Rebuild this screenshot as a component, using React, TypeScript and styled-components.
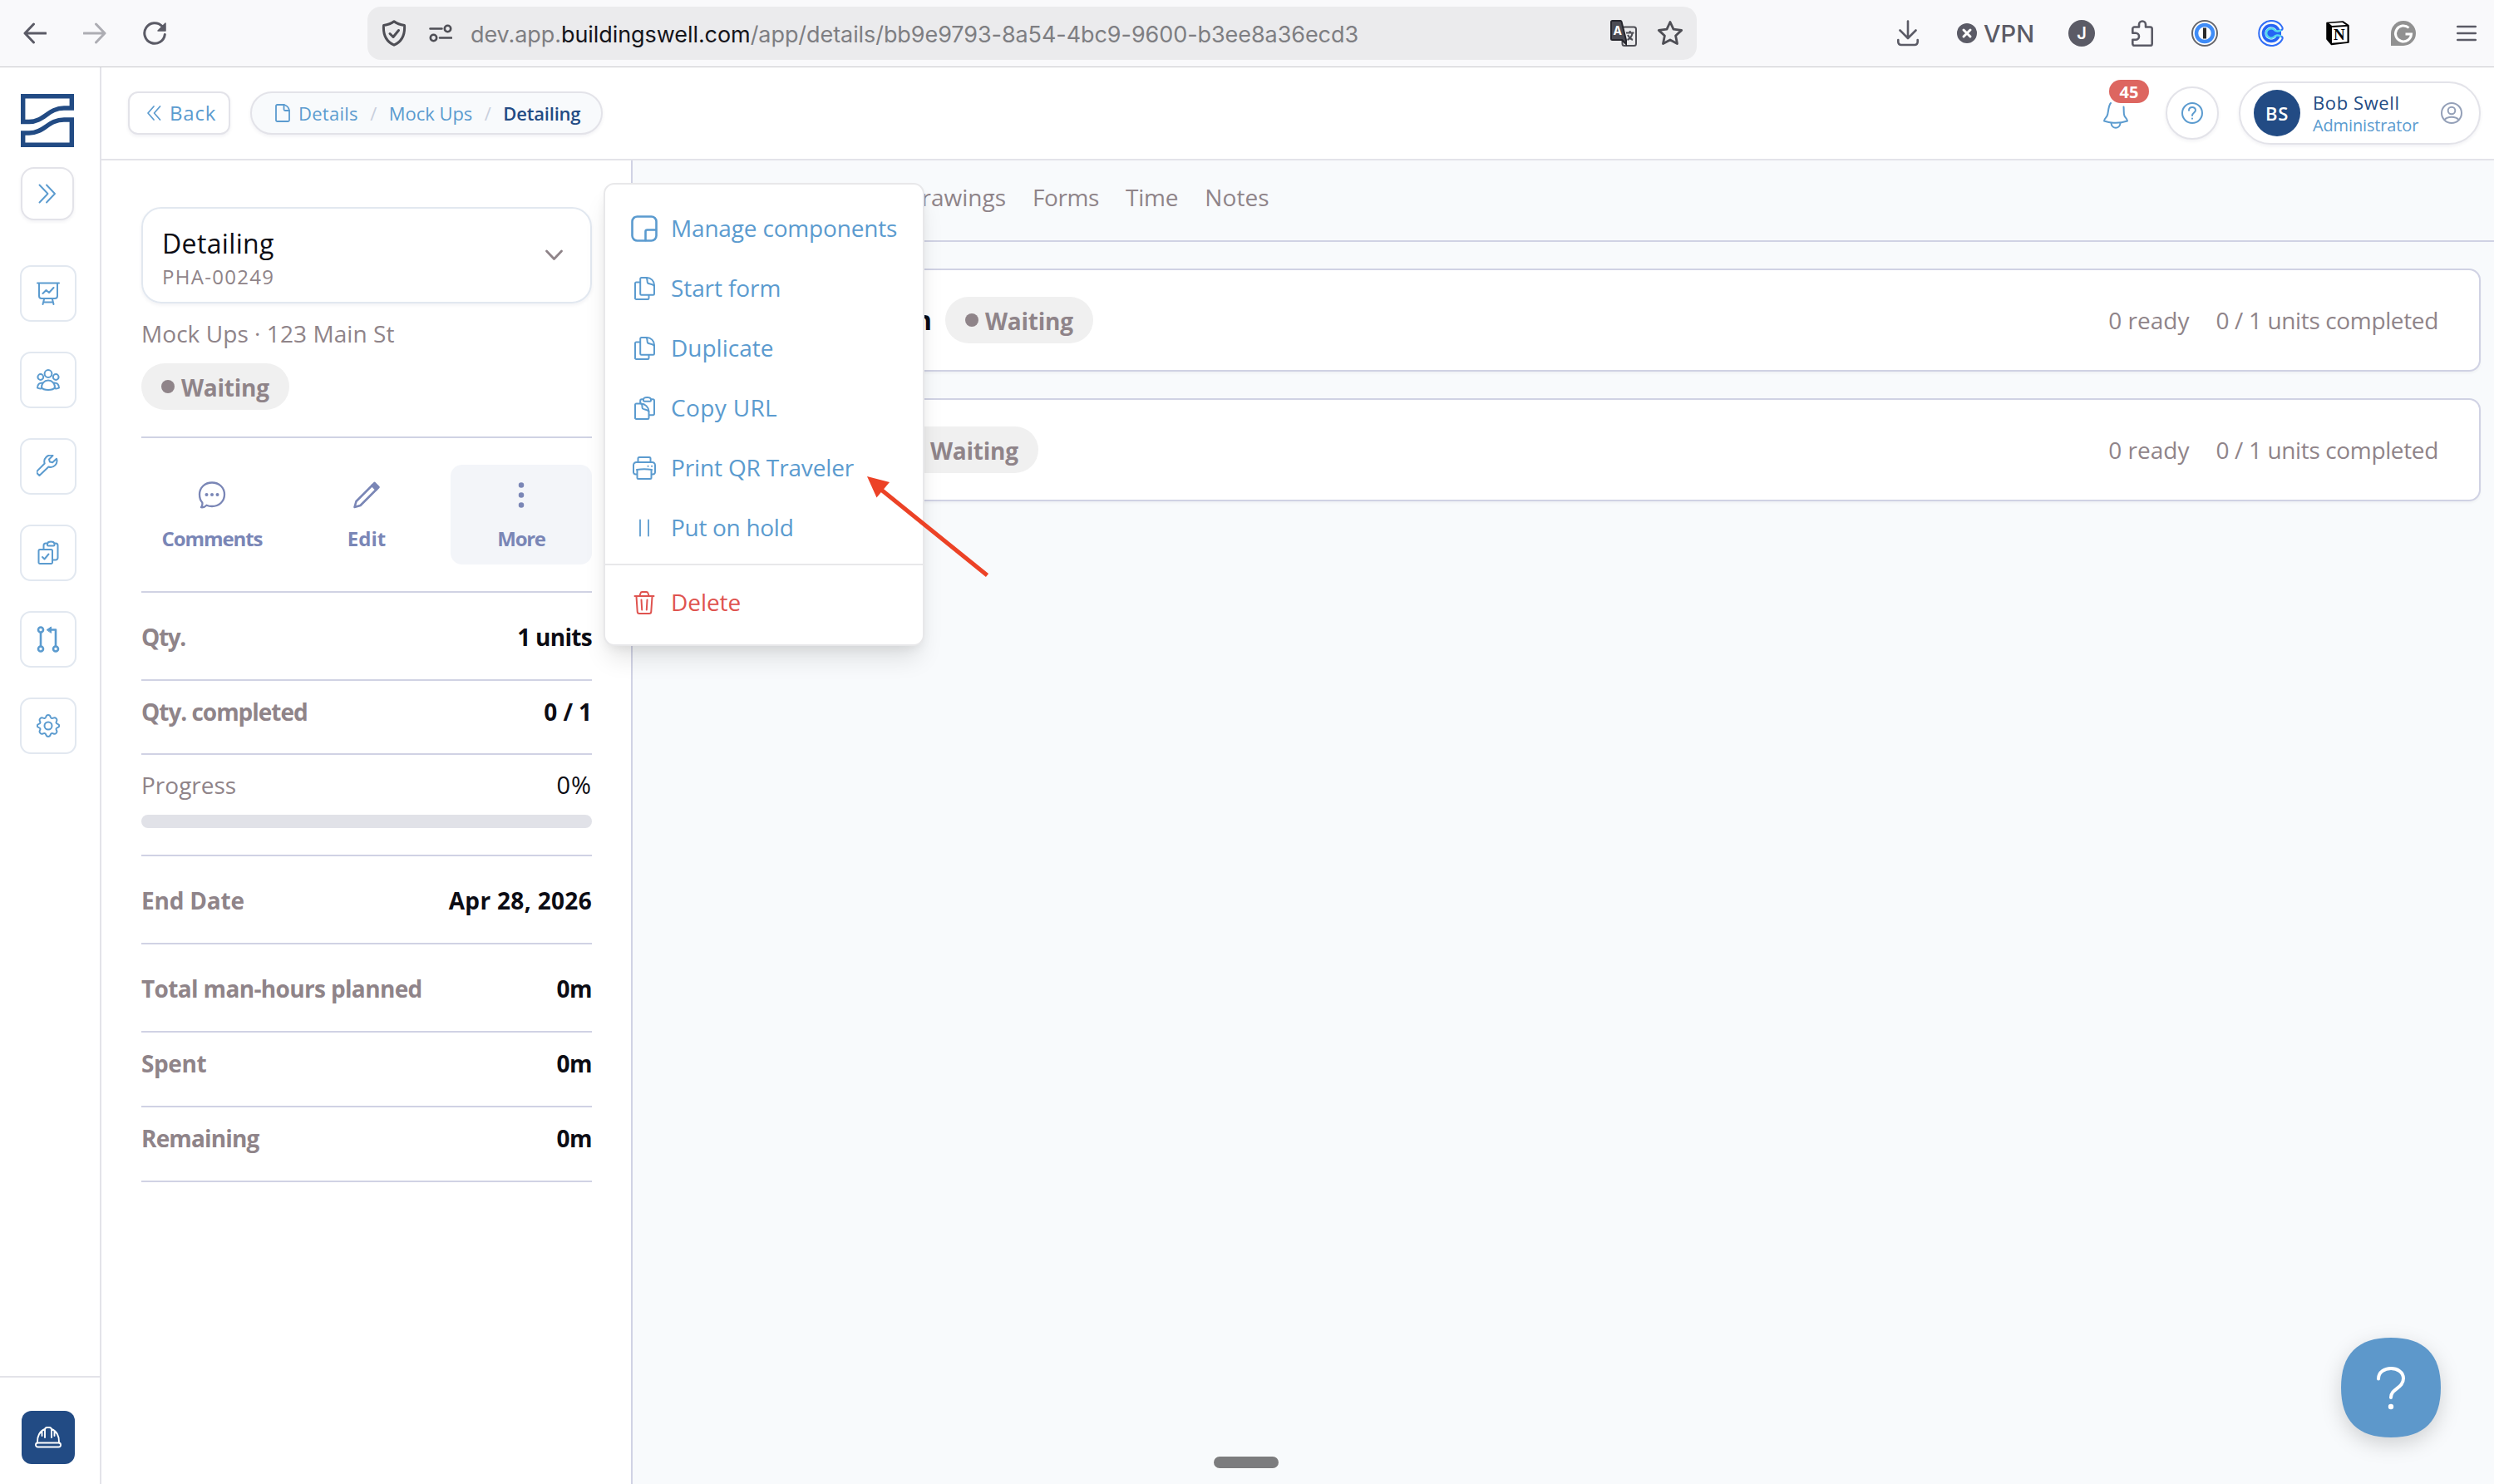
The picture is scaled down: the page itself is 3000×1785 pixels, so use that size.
import React from "react";
import styled, { createGlobalStyle, css } from "styled-components";

const blue = "#5b9bcf";
const navy = "#224b84";
const mute = "#8f8489";
const line = "#d0d2e4";
const edge = "#e3e3e9";
const ink = "#0c0c14";
const violet = "#7a86b6";
const chrome = "#5b5b66";

const GlobalStyle = createGlobalStyle`
  *, *::before, *::after { box-sizing: border-box; }
  body { margin: 0; background: #fff; font-family: "Open Sans", "Noto Sans", sans-serif; }
`;

interface TextProps {
  $size?: number;
  $weight?: number;
  $track?: number;
  $color?: string;
}

const Text = styled.span<TextProps>`
  display: block;
  white-space: nowrap;
  font-size: ${(p) => p.$size ?? 28}px;
  line-height: 1.5;
  font-weight: ${(p) => p.$weight ?? 400};
  letter-spacing: ${(p) => p.$track ?? 0}px;
  color: ${(p) => p.$color ?? mute};
`;

const Page = styled.div`
  position: relative;
  width: 3000px;
  height: 1785px;
  overflow: hidden;
  display: flex;
  flex-direction: column;
  background: #fff;
`;

/* Browser chrome */

const BrowserBar = styled.header`
  flex: none;
  height: 81px;
  display: flex;
  align-items: center;
  padding: 0 20px 0 28px;
  background: #f9f9fb;
  border-bottom: 1px solid #c9c9cc;
`;

const HistoryButtons = styled.div`
  display: flex;
  align-items: center;
  gap: 44px;
  width: 414px;
`;

const AddressBar = styled.div`
  width: 1599px;
  height: 64px;
  border-radius: 16px;
  background: #ebebed;
  display: flex;
  align-items: center;
  padding: 0 16px 0 17px;
`;

const Address = styled.div`
  flex: 1;
  margin-left: 22px;
  padding-top: 2px;
  font-family: Inter, "Liberation Sans", sans-serif;
  font-size: 27px;
  letter-spacing: -0.07px;
  white-space: nowrap;
  color: #7e7e82;
  strong { font-weight: 400; color: #15141a; }
`;

const AddressTools = styled.div`
  display: flex;
  align-items: center;
  gap: 24px;
`;

const Extension = styled.div<{ $gap: number }>`
  margin-left: ${(p) => p.$gap}px;
  display: flex;
  align-items: center;
  gap: 8px;
`;

const VpnLabel = styled.span`
  width: 63px;
  font-family: Inter, sans-serif;
  font-size: 29px;
  font-weight: 500;
  color: ${chrome};
`;

const Initial = styled.span`
  width: 32px;
  height: 32px;
  border-radius: 50%;
  background: ${chrome};
  color: #fff;
  font: 600 20px/32px Inter, sans-serif;
  text-align: center;
`;

/* Application shell */

const Shell = styled.div`
  flex: 1;
  display: flex;
  min-height: 0;
`;

const Sidebar = styled.aside`
  flex: none;
  width: 122px;
  border-right: 2px solid ${edge};
  display: flex;
  flex-direction: column;
`;

const SidebarTop = styled.div`
  padding: 32px 0 0 25px;
  display: flex;
  flex-direction: column;
  gap: 24px;
`;

const surface = css`
  background: #fff;
  border: 2px solid ${edge};
  box-shadow: 0 2px 4px rgba(20, 20, 60, 0.06);
`;

const ExpandButton = styled.button`
  ${surface}
  width: 64px;
  height: 64px;
  padding: 0;
  border-radius: 16px;
  display: grid;
  place-items: center;
`;

const NavList = styled.nav`
  padding: 54px 0 0 24px;
  display: flex;
  flex-direction: column;
  gap: 36px;
`;

const NavButton = styled.button`
  width: 68px;
  height: 68px;
  padding: 0;
  border: 2px solid #e2e8f0;
  border-radius: 13px;
  background: #fff;
  display: grid;
  place-items: center;
`;

const SidebarFoot = styled.div`
  margin-top: auto;
  height: 130px;
  border-top: 2px solid ${edge};
  padding: 40px 0 0 26px;
`;

const HatButton = styled.button`
  width: 64px;
  height: 64px;
  padding: 0;
  border: 0;
  border-radius: 12px;
  background: ${navy};
  display: grid;
  place-items: center;
`;

const Workspace = styled.div`
  flex: 1;
  min-width: 0;
  display: flex;
  flex-direction: column;
`;

const TopBar = styled.div`
  flex: none;
  height: 112px;
  border-bottom: 2px solid ${edge};
  display: flex;
  align-items: center;
  padding: 0 16px 0 32px;
`;

const BackButton = styled.button`
  ${surface}
  width: 123px;
  height: 52px;
  border-radius: 12px;
  padding: 0 0 0 20px;
  display: flex;
  align-items: center;
  gap: 10px;
  font-family: inherit;
`;

const Breadcrumb = styled.nav`
  ${surface}
  width: 424px;
  height: 52px;
  margin-left: 24px;
  padding-left: 28px;
  border-radius: 26px;
  background: #f8fafc;
  display: flex;
  align-items: center;
  gap: 14.5px;
`;

const Crumb = styled.span`
  display: flex;
  align-items: center;
  gap: 10px;
`;

const TopActions = styled.div`
  margin-left: auto;
  display: flex;
  align-items: center;
  gap: 24px;
`;

const Bell = styled.div`
  position: relative;
  width: 57px;
  height: 64px;
  padding: 14px 0 0 6px;
`;

const BellCount = styled.span`
  position: absolute;
  left: 13px;
  top: -8px;
  width: 48px;
  height: 28px;
  border-radius: 14px;
  background: #dd6660;
  color: #fff;
  font-size: 20px;
  font-weight: 700;
  line-height: 29px;
  text-align: center;
`;

const RoundButton = styled.button`
  ${surface}
  width: 64px;
  height: 64px;
  padding: 0;
  border-radius: 50%;
  display: grid;
  place-items: center;
`;

const UserPill = styled.div`
  ${surface}
  width: 291px;
  height: 76px;
  border-radius: 38px;
  padding-left: 16px;
  display: flex;
  align-items: center;
`;

const Avatar = styled.div`
  width: 56px;
  height: 56px;
  border-radius: 50%;
  background: ${navy};
  display: grid;
  place-items: center;
`;

const UserText = styled.div`
  width: 154px;
  margin-left: 15px;
  padding-top: 2px;
  display: flex;
  flex-direction: column;
  ${Text} { line-height: 27px; }
`;

const Body = styled.div`
  flex: 1;
  min-height: 0;
  display: flex;
`;

/* Detail panel */

const Panel = styled.section`
  flex: none;
  width: 639px;
  border-right: 2px solid ${line};
  padding: 56px 47px 0 48px;
`;

const PhaseSelect = styled.div`
  height: 116px;
  border: 2px solid #e2e8f0;
  border-radius: 24px;
  box-shadow: 0 2px 4px rgba(20, 20, 60, 0.06);
  padding: 0 30px 0 23px;
  display: flex;
  align-items: center;
  justify-content: space-between;
`;

const PhaseName = styled.div`
  padding-top: 7px;
  ${Text}:first-child { line-height: 44px; }
  ${Text}:last-child { line-height: 36px; }
`;

const Location = styled.div`
  padding: 15px 0 15px;
`;

const Badge = styled.span`
  width: 178px;
  height: 56px;
  border-radius: 28px;
  background: #f0f0f0;
  padding-left: 24px;
  display: flex;
  align-items: center;
  gap: 8px;
  flex: none;
  ${Text} { padding-top: 2px; }
`;

const Dot = styled.i`
  width: 16px;
  height: 16px;
  border-radius: 50%;
  background: ${mute};
`;

const Actions = styled.div`
  margin-top: 32px;
  border-top: 2px solid ${line};
  border-bottom: 2px solid ${line};
  padding: 32px 0;
  display: grid;
  grid-template-columns: repeat(3, 1fr);
  gap: 16px;
`;

const Action = styled.div<{ $active?: boolean }>`
  position: relative;
  height: 120px;
  border-radius: 14px;
  background: ${(p) => (p.$active ? "#f3f5f9" : "transparent")};
  padding-top: 20px;
  display: flex;
  flex-direction: column;
  align-items: center;
  gap: 17px;
`;

const FactRow = styled.div<{ $top: number; $bottom: number }>`
  padding: ${(p) => p.$top}px 0 ${(p) => p.$bottom}px;
  border-bottom: 2px solid ${line};
`;

const FactLine = styled.div`
  height: 42px;
  display: flex;
  align-items: center;
  justify-content: space-between;
`;

const Track = styled.div`
  height: 16px;
  margin-top: 15px;
  border-radius: 8px;
  background: #e1e2e8;
`;

/* Context menu */

const Menu = styled.div`
  position: absolute;
  z-index: 2;
  left: 184px;
  top: -339px;
  width: 386px;
  height: 557px;
  padding-top: 17px;
  background: #fff;
  border: 2px solid #e8e8ea;
  border-radius: 13px;
  box-shadow: 0 20px 30px -6px rgba(0, 0, 0, 0.11), 0 6px 14px -4px rgba(0, 0, 0, 0.08);
`;

const MenuItem = styled.div`
  height: 72px;
  padding-left: 29px;
  display: flex;
  align-items: center;
  gap: 14px;
  ${Text} { padding-bottom: 2px; }
`;

const MenuIcon = styled.span`
  width: 36px;
  display: grid;
  place-items: center;
`;

const MenuRule = styled.div`
  height: 2px;
  margin: 7px 0 9px;
  background: #e8e8ea;
`;

/* Main area */

const Main = styled.main`
  flex: 1;
  min-width: 0;
  background: #f8fafc;
`;

const Tabs = styled.nav`
  height: 98px;
  border-bottom: 2px solid ${line};
  padding-bottom: 8px;
  display: flex;
  align-items: center;
  gap: 32px;
`;

const LeadingTabs = styled.div`
  width: 449px;
  display: flex;
  justify-content: flex-end;
  gap: 32px;
`;

const Cards = styled.div`
  padding: 32px 16px;
  display: flex;
  flex-direction: column;
  gap: 32px;
`;

const Card = styled.article`
  height: 124px;
  background: #fff;
  border: 2px solid ${line};
  border-radius: 14px;
  box-shadow: 0 2px 3px rgba(20, 20, 60, 0.04);
  padding-right: 49px;
  display: flex;
  align-items: center;
`;

const CardTitle = styled.div<{ $width: number }>`
  width: ${(p) => p.$width}px;
  margin-right: 16px;
  display: flex;
  justify-content: flex-end;
`;

const CardStats = styled.div`
  margin-left: auto;
  display: flex;
  gap: 32px;
`;

const Handle = styled.div`
  position: absolute;
  left: 1460px;
  top: 1752px;
  width: 78px;
  height: 14px;
  border-radius: 7px;
  background: #7c7c7e;
  box-shadow: 0 0 0 1px rgba(255, 255, 255, 0.7);
`;

const HelpWidget = styled.button`
  position: absolute;
  left: 2816px;
  top: 1609px;
  padding: 0;
  border: 0;
  background: none;
  svg { display: block; overflow: visible; filter: drop-shadow(0 8px 12px rgba(0, 0, 0, 0.16)); }
`;

const Pointer = styled.svg`
  position: absolute;
  z-index: 3;
  left: 1036px;
  top: 566px;
`;

/* Icons */

interface IconProps {
  w: number;
  h: number;
  color?: string;
  sw?: number;
  children: React.ReactNode;
}

const Icon = ({ w, h, color = blue, sw = 2, children }: IconProps) => (
  <svg width={w} height={h} viewBox={`0 0 ${w} ${h}`} fill="none" stroke={color} strokeWidth={sw} strokeLinecap="round" strokeLinejoin="round">
    {children}
  </svg>
);

const Logo = () => (
  <svg width="64" height="64" viewBox="0 0 64 64" fill="none" stroke={navy}>
    <path strokeWidth="5.4" d="M2.7 35V2.7H61.3V19" />
    <path strokeWidth="5.4" d="M0 33.5H10C28 33.5 33 17 52 17H64" />
    <path strokeWidth="5.4" d="M0 47H10C28 47 33 31 52 31H64" />
    <path strokeWidth="5.4" d="M2.7 46V61.3H61.3V31" />
  </svg>
);

const FilesIcon = () => (
  <Icon w={26} h={28}>
    <path d="M9.5 1h6.500c5 0 9 4 9 9v10.500a1.300 1.300 0 0 1-1.300 1.300H9.500a1.300 1.300 0 0 1-1.300-1.300V2.300A1.300 1.300 0 0 1 9.500 1z" />
    <path d="M15 1c2.500.8.8 5 2.200 6.500S22.500 8 25 11" />
    <path d="M8 6.500H3.300A1.300 1.300 0 0 0 2 7.800V25.700A1.300 1.300 0 0 0 3.300 27H17.200a1.300 1.300 0 0 0 1.300-1.300V22" />
  </Icon>
);

const UrlIcon = () => (
  <Icon w={26} h={28}>
    <path d="M3.300 8.500H9c5 0 9.500 4.500 9.500 9.500v7.700a1.300 1.300 0 0 1-1.300 1.300H3.300A1.300 1.300 0 0 1 2 25.700V9.800A1.300 1.300 0 0 1 3.300 8.500z" />
    <path d="M9 8.500c2.500.8.800 4.500 2 6s5 .5 7.300 3" />
    <path d="M8.200 8V5a1.700 1.700 0 0 1 1.700-1.700h2M21 3.300h2.300A1.700 1.700 0 0 1 25 5v15.500a1.700 1.700 0 0 1-1.700 1.700H19" />
    <path d="M12 3.300c.5-3 8.500-3 9 0v1.400a1 1 0 0 1-1 1h-7a1 1 0 0 1-1-1z" />
  </Icon>
);

const PrintIcon = () => (
  <Icon w={28} h={28}>
    <path d="M6.500 7V2.500A1.500 1.500 0 0 1 8 1h12a1.500 1.500 0 0 1 1.500 1.500V7" />
    <path d="M5 21.500H3.500A2.500 2.500 0 0 1 1 19v-8.500A3.500 3.500 0 0 1 4.500 7h19a3.500 3.500 0 0 1 3.500 3.500V19a2.500 2.500 0 0 1-2.500 2.500H23" />
    <path d="M5 16c6-1 12-1 18 0M5.500 16v9.500A1.500 1.500 0 0 0 7 27h14a1.500 1.500 0 0 0 1.500-1.500V16" />
    <path d="M18.500 11.800h.1M23 11.800h.1" />
  </Icon>
);

const menuItems: { label: string; track: number; icon: React.ReactNode }[] = [
  {
    label: "Manage components",
    track: -0.18,
    icon: (
      <Icon w={32} h={32} sw={2.600}>
        <rect x="1.500" y="1.500" width="29" height="29" rx="6" />
        <path d="M30 17.500H19.500a2 2 0 0 0-2 2V30" />
      </Icon>
    ),
  },
  { label: "Start form", track: -0.1, icon: <FilesIcon /> },
  { label: "Duplicate", track: 0, icon: <FilesIcon /> },
  { label: "Copy URL", track: 0.35, icon: <UrlIcon /> },
  { label: "Print QR Traveler", track: -0.14, icon: <PrintIcon /> },
  {
    label: "Put on hold",
    track: -0.3,
    icon: (
      <Icon w={14} h={22} sw={1.800}>
        <path d="M2 1.500v19M12 1.500v19" />
      </Icon>
    ),
  },
];

const navIcons: React.ReactNode[] = [
  <Icon w={28} h={28}>
    <path d="M1 1.500h26M3 2v15a3 3 0 0 0 3 3h16a3 3 0 0 0 3-3V2M9 21l-1.500 6M19 21l1.500 6M8.300 24.500h11.400M7.500 14l4-4 3.500 3 5.500-6" />
  </Icon>,
  <Icon w={28} h={26}>
    <circle cx="14" cy="5.500" r="4.400" />
    <circle cx="4.800" cy="9.500" r="3.400" />
    <circle cx="23.200" cy="9.500" r="3.400" />
    <path d="M14 13.500c-5 0-8 4-8 8.500 2 4 14 4 16 0 0-4.500-3-8.500-8-8.500zM7.500 16.500C3.500 16 1 18.500 1 22.500c1 .8 3 1 5 .8M20.500 16.500c4-.5 6.500 2 6.500 6-1 .8-3 1-5 .8" />
  </Icon>,
  <Icon w={28} h={28}>
    <path transform="translate(-1.500 -1.500)" d="M21 2.500a7.600 7.600 0 0 0-9.800 9.500L2.600 20.600a2.500 2.500 0 0 0 0 3.600l2.300 2.300 11-10.500a7.600 7.600 0 0 0 9.600-9.800l-4.800 4.600-3.300-.8-.900-3z" />
  </Icon>,
  <Icon w={26} h={30}>
    <path d="M3 11h13.500a1.500 1.500 0 0 1 1.500 1.500v14a1.500 1.500 0 0 1-1.500 1.500H3a1.500 1.500 0 0 1-1.500-1.500v-14A1.500 1.500 0 0 1 3 11zM6 20l2.500 2.500 5-6" />
    <path d="M7.500 10.500V6A2.500 2.500 0 0 1 10 3.500h2M20.500 3.500h1.500A2.500 2.500 0 0 1 24.500 6v15a2.500 2.500 0 0 1-2.500 2.500h-3.500M12 4c.5-3.500 8-3.500 8.500 0v1.500a1 1 0 0 1-1 1H13a1 1 0 0 1-1-1z" />
  </Icon>,
  <Icon w={28} h={32} sw={2.600}>
    <circle cx="5" cy="4.500" r="3" />
    <circle cx="5" cy="27.500" r="3" />
    <circle cx="23" cy="27.500" r="3" />
    <path d="M5 8v16M23 24V4.500h-7" />
    <path d="M12.500 4.500l5-3.500v7z" fill={blue} strokeWidth="1" />
  </Icon>,
  <Icon w={28} h={28}>
    <circle cx="14" cy="14" r="4.500" />
    <path d="M11.300 3.200c.8-2.900 4.600-2.900 5.400 0 .6 1.800 1.800 2.300 3.400 1.500 2.600-1.400 5.300 1.300 3.900 3.900-.9 1.600-.4 2.800 1.300 3.300 2.600.8 2.600 3.400 0 4.200-1.700.5-2.200 1.700-1.300 3.300 1.400 2.600-1.300 5.300-3.900 3.900-1.600-.8-2.800-.3-3.400 1.500-.8 2.900-4.600 2.900-5.400 0-.6-1.800-1.800-2.300-3.400-1.500-2.600 1.400-5.300-1.300-3.900-3.900.9-1.600.4-2.800-1.300-3.300-2.600-.8-2.600-3.400 0-4.200 1.700-.5 2.200-1.700 1.300-3.300C2.600 6 5.300 3.300 7.900 4.700c1.600.8 2.800.3 3.400-1.500z" />
  </Icon>,
];

const facts: { label: string; track: number; value: string; valueTrack: number; top: number; bottom: number }[] = [
  { label: "End Date", track: -0.2, value: "Apr 28, 2026", valueTrack: 0.33, top: 32, bottom: 30 },
  { label: "Total man-hours planned", track: -0.65, value: "0m", valueTrack: -0.5, top: 32, bottom: 30 },
  { label: "Spent", track: -0.4, value: "0m", valueTrack: -0.5, top: 16, bottom: 30 },
  { label: "Remaining", track: -0.84, value: "0m", valueTrack: -0.5, top: 16, bottom: 30 },
];

const WaitingBadge = () => (
  <Badge>
    <Dot />
    <Text $weight={700} $track={-0.25}>Waiting</Text>
  </Badge>
);

const Fact = ({ label, track, value, valueTrack, top, bottom }: (typeof facts)[number]) => (
  <FactRow $top={top} $bottom={bottom}>
    <FactLine>
      <Text $weight={700} $track={track}>{label}</Text>
      <Text $weight={700} $track={valueTrack} $color={ink}>{value}</Text>
    </FactLine>
  </FactRow>
);

const ActionMenu = () => (
  <Menu>
    {menuItems.map((item) => (
      <MenuItem key={item.label}>
        <MenuIcon>{item.icon}</MenuIcon>
        <Text $color={blue} $track={item.track}>{item.label}</Text>
      </MenuItem>
    ))}
    <MenuRule />
    <MenuItem>
      <MenuIcon>
        <Icon w={26} h={28} color="#df534f">
          <path d="M1.500 6h23M7.500 5.500l1-3A2 2 0 0 1 10.400 1h5.200a2 2 0 0 1 1.900 1.500l1 3M3.500 6.500l1.200 18A2.500 2.500 0 0 0 7.200 27h11.600a2.500 2.500 0 0 0 2.500-2.500l1.200-18M9.500 10.500l.7 12M16.500 10.500l-.7 12" />
        </Icon>
      </MenuIcon>
      <Text $color="#df534f" $track={-0.06}>Delete</Text>
    </MenuItem>
  </Menu>
);

const Browser = () => (
  <BrowserBar>
    <HistoryButtons>
      <Icon w={28} h={26} color={chrome} sw={3}>
        <path d="M27 13H2M12.500 2L2 13l10.500 11" />
      </Icon>
      <Icon w={28} h={26} color="#adadb3" sw={3}>
        <path d="M1 13h25M15.500 2L26 13 15.500 24" />
      </Icon>
      <Icon w={28} h={28} color={chrome} sw={3}>
        <path d="M26.300 15.500A12.300 12.300 0 1 1 23 5.500" />
        <path d="M27 2v9h-9z" fill={chrome} strokeWidth="1.500" />
      </Icon>
    </HistoryButtons>
    <AddressBar>
      <Icon w={30} h={32} color="#4e4e55" sw={3}>
        <path d="M15 1.800c3.500 2.700 7.500 4 12.500 4.700.800 11-3 19.500-12.500 23.700C5.500 26 1.700 17.500 2.500 6.500 7.500 5.800 11.500 4.500 15 1.800z" />
        <path d="M10 16.500l4 4 6.500-8" />
      </Icon>
      <Extension $gap={27}>
        <Icon w={28} h={22} color="#4e4e55" sw={2.600}>
          <path d="M1.500 5.500h14M13 16.500h14" />
          <circle cx="22.500" cy="5.500" r="3.700" />
          <circle cx="5.500" cy="16.500" r="3.700" />
        </Icon>
      </Extension>
      <Address>
        dev.app.<strong>buildingswell.com</strong>/app/details/bb9e9793-8a54-4bc9-9600-b3ee8a36ecd3
      </Address>
      <AddressTools>
        <svg width="32" height="32" viewBox="0 0 32 32" fill="none">
          <rect x="14.500" y="8.500" width="16.500" height="22.500" rx="2.500" stroke="#4e4e55" strokeWidth="2" />
          <path d="M19 15.500h9.500M23.700 13v2.500M20.500 24c3-1.500 5.500-4.500 6-8M21 18c1.500 3 3.500 5 6 6" stroke="#4e4e55" strokeWidth="2" />
          <path d="M2.500 1h9.500a1.500 1.500 0 0 1 1.500 1L19 24v5l-5-5H2.500A1.500 1.500 0 0 1 1 22.500v-20A1.500 1.500 0 0 1 2.500 1z" fill="#4b4b53" stroke="#25252c" strokeWidth="2" />
          <text x="3.500" y="18" fill="#fff" fontFamily="Inter, sans-serif" fontSize="14" fontWeight="700">A</text>
        </svg>
        <Icon w={32} h={32} color="#4e4e55" sw={2.800}>
          <path d="M16 2.500l4 8.700 9.700 1.200-7.100 6.600 1.900 9.600L16 23.900l-8.500 4.700 1.900-9.600-7.100-6.600 9.700-1.200z" />
        </Icon>
      </AddressTools>
    </AddressBar>
    <Extension $gap={241}>
      <Icon w={26} h={32} color={chrome} sw={2.600}>
        <path d="M13 1.500v20M3.500 12.500l9.500 9.500 9.500-9.500M1.300 24v2.500a3.500 3.500 0 0 0 3.500 3.500h16.400a3.500 3.500 0 0 0 3.500-3.500V24" />
      </Icon>
    </Extension>
    <Extension $gap={46}>
      <Icon w={24} h={24} color="#fff" sw={3}>
        <circle cx="12" cy="12" r="12" fill={chrome} stroke="none" />
        <path d="M8 8l8 8M16 8l-8 8" />
      </Icon>
      <VpnLabel>VPN</VpnLabel>
    </Extension>
    <Extension $gap={39}>
      <Initial>J</Initial>
    </Extension>
    <Extension $gap={44}>
      <Icon w={26} h={32} color={chrome} sw={2.600}>
        <path d="M3.500 8.500H9v-3a4 4 0 0 1 8 0v3h5.500a2.200 2.200 0 0 1 2.200 2.200v18a2.200 2.200 0 0 1-2.200 2.200h-19a2.200 2.200 0 0 1-2.200-2.200v-5H5a4 4 0 0 0 0-8H1.300v-5a2.200 2.200 0 0 1 2.200-2.200z" />
      </Icon>
    </Extension>
    <Extension $gap={46}>
      <svg width="32" height="32" viewBox="0 0 32 32">
        <circle cx="16" cy="16" r="15" fill="#fff" stroke="#66666b" strokeWidth="2" />
        <circle cx="16" cy="16" r="10" fill="#fff" stroke="#3f8cf7" strokeWidth="4.500" />
        <rect x="14" y="9.500" width="4" height="13" fill="#2b2b2b" />
      </svg>
    </Extension>
    <Extension $gap={48}>
      <svg width="32" height="32" viewBox="0 0 32 32" fill="none">
        <path d="M29.500 9A15 15 0 1 0 29.500 23" stroke="#2f6df6" strokeWidth="2" />
        <path d="M29.500 9c1 3-2 4-5 4M29.500 23c1-3-2-4-5-4" stroke="#2f6df6" strokeWidth="2" />
        <circle cx="16" cy="16" r="11.300" fill="#2565f4" />
        <path d="M30 13.500h-7a7.500 7.500 0 1 0 0 5h7z" fill="#f9f9fb" />
        <path d="M28 12c-3 2.500-7 1.500-8.500-.5A6 6 0 0 0 10 16a6 6 0 0 0 9.500 4.500c1.500-2 5.500-3 8.500-.500" fill="#2565f4" stroke="#56d8ee" strokeWidth="2.600" />
      </svg>
    </Extension>
    <Extension $gap={50}>
      <svg width="28" height="30" viewBox="0 0 28 30">
        <path d="M1 2.500L20.500 1 27 5.500V26L6.500 28.500 1 22z" fill="#000" stroke="#000" strokeWidth="1.500" strokeLinejoin="round" />
        <path d="M3.500 3L19.500 2 24 5 7 6z" fill="#fff" />
        <path d="M7 8l18.500-1.200v18.500L7 26.800z" fill="#fff" />
        <text x="9" y="23" fontFamily="Liberation Serif, serif" fontWeight="700" fontSize="19">N</text>
      </svg>
    </Extension>
    <Extension $gap={50}>
      <svg width="30" height="30" viewBox="0 0 30 30" fill="none">
        <path d="M15 0A15 15 0 1 1 15 30H0V15A15 15 0 0 1 15 0z" fill="#919191" />
        <path d="M21.500 8.500A9.500 9.500 0 1 0 24.500 16H17.500" stroke="#fff" strokeWidth="3" />
      </svg>
    </Extension>
    <Extension $gap={49}>
      <Icon w={24} h={20} color={chrome} sw={2.500}>
        <path d="M1.200 2h21.600M1.200 10h21.600M1.200 18h21.600" />
      </Icon>
    </Extension>
  </BrowserBar>
);

const Header = () => (
  <TopBar>
    <BackButton>
      <Icon w={18} h={20} sw={1.700}>
        <path d="M9 2L2 10l7 8M16.500 2l-7 8 7 8" />
      </Icon>
      <Text $size={24} $track={0.8} $color={blue}>Back</Text>
    </BackButton>
    <Breadcrumb>
      <Crumb>
        <Icon w={18} h={22} sw={1.800}>
          <path d="M2.500 1H11c4 1.500 6 3.500 6 8v10.500a1.500 1.500 0 0 1-1.500 1.500h-13A1.500 1.500 0 0 1 1 19.500v-17A1.500 1.500 0 0 1 2.500 1z" />
          <path d="M10.500 1v5.500a1.500 1.500 0 0 0 1.500 1.500h5" />
        </Icon>
        <Text $size={22} $track={0.25} $color={blue}>Details</Text>
      </Crumb>
      <Text $size={22} $color="#c9cfdc">/</Text>
      <Text $size={22} $track={-0.05} $color={blue}>Mock Ups</Text>
      <Text $size={22} $color="#c9cfdc">/</Text>
      <Text $size={22} $weight={600} $track={-0.2} $color={navy}>Detailing</Text>
    </Breadcrumb>
    <TopActions>
      <Bell>
        <Icon w={30} h={38}>
          <path d="M9 6C5.500 10 6.500 18 4.500 21.500 3.500 23.500 1 25 1 27.500c9 3 19 3 28 0 0-2.500-2.500-4-3.500-6-1.300-3-.5-6-1-11" />
          <path d="M9.500 30c.5 7.500 10.500 7.500 11 0" />
        </Icon>
        <BellCount>45</BellCount>
      </Bell>
      <RoundButton>
        <Icon w={26} h={26}>
          <circle cx="13" cy="13" r="12" />
          <path d="M9 9.800c0-5 8-5 8-.3 0 3-4 3-4 6.500M13 19.500v.2" />
        </Icon>
      </RoundButton>
      <UserPill>
        <Avatar>
          <Text $size={22} $weight={600} $track={0.6} $color="#fff">BS</Text>
        </Avatar>
        <UserText>
          <Text $size={22} $track={0.6} $color={navy}>Bob Swell</Text>
          <Text $size={20} $track={-0.14} $color={blue}>Administrator</Text>
        </UserText>
        <Icon w={26} h={26} color="#94a0b8">
          <circle cx="13" cy="13" r="12" />
          <circle cx="13" cy="10" r="4.300" />
          <path d="M4.500 21c3.500-4.500 13.500-4.500 17 0" />
        </Icon>
      </UserPill>
    </TopActions>
  </TopBar>
);

const DetailPanel = () => (
  <Panel>
    <PhaseSelect>
      <PhaseName>
        <Text $size={32} $track={0.35} $color={ink}>Detailing</Text>
        <Text $size={24} $track={1.3}>PHA-00249</Text>
      </PhaseName>
      <Icon w={26} h={16} color={mute} sw={2.800}>
        <path d="M3.500 3l9 9.500 9-9.500" />
      </Icon>
    </PhaseSelect>
    <Location>
      <Text $track={0.06}>Mock Ups · 123 Main St</Text>
    </Location>
    <WaitingBadge />
    <Actions>
      <Action>
        <Icon w={34} h={34} color={violet} sw={2.300}>
          <path d="M17 1.500c8.600 0 15 6 15 14.300S25.600 30 17 30c-2.500 0-4.500-.4-6.500-1.300-1.700 1.800-4 2.800-6.500 2.500 1.300-1.700 1.700-3.700 1.300-5.700C3 23 2 19.500 2 15.800 2 7.500 8.400 1.500 17 1.500z" />
          <path d="M10.500 16h.01M17 16h.01M23.500 16h.01" strokeWidth="4" />
        </Icon>
        <Text $size={24} $weight={700} $track={-1.09} $color={violet}>Comments</Text>
      </Action>
      <Action>
        <Icon w={34} h={34} color={violet} sw={2.600}>
          <path d="M4.500 24L24 4.500l5 5L9.500 29 2.500 31z" />
          <path d="M23.500 5l3-3 5 5-3 3z" fill={violet} />
        </Icon>
        <Text $size={24} $weight={700} $color={violet}>Edit</Text>
      </Action>
      <Action $active>
        <Icon w={34} h={34} color={violet} sw={6.500}>
          <path d="M17 4.500h.01M17 16.500h.01M17 28.500h.01" />
        </Icon>
        <Text $size={24} $weight={700} $track={-1.3} $color={violet}>More</Text>
        <ActionMenu />
      </Action>
    </Actions>
    <Fact label="Qty." track={-1.4} value="1 units" valueTrack={-0.7} top={32} bottom={30} />
    <Fact label="Qty. completed" track={-1.03} value="0 / 1" valueTrack={-0.1} top={16} bottom={29} />
    <FactRow $top={15} $bottom={32}>
      <FactLine>
        <Text>Progress</Text>
        <Text $size={29} $track={1} $color={ink}>0%</Text>
      </FactLine>
      <Track />
    </FactRow>
    {facts.map((fact) => (
      <Fact key={fact.label} {...fact} />
    ))}
  </Panel>
);

const cards: { id: number; title?: string; width: number }[] = [
  { id: 1, title: "Fabrication", width: 342 },
  { id: 2, width: 276 },
];

const Content = () => (
  <Main>
    <Tabs>
      <LeadingTabs>
        <Text>Tasks</Text>
        <Text>Drawings</Text>
      </LeadingTabs>
      <Text $track={-0.42}>Forms</Text>
      <Text $track={-0.2}>Time</Text>
      <Text $track={0.1}>Notes</Text>
    </Tabs>
    <Cards>
      {cards.map((card) => (
        <Card key={card.id}>
          <CardTitle $width={card.width}>
            {card.title && <Text $size={32} $weight={700} $color={ink}>{card.title}</Text>}
          </CardTitle>
          <WaitingBadge />
          <CardStats>
            <Text>0 ready</Text>
            <Text $track={-0.36}>0 / 1 units completed</Text>
          </CardStats>
        </Card>
      ))}
    </Cards>
  </Main>
);

export default function App() {
  return (
    <>
      <GlobalStyle />
      <Page>
        <Browser />
        <Shell>
          <Sidebar>
            <SidebarTop>
              <Logo />
              <ExpandButton>
                <Icon w={22} h={24} sw={1.900}>
                  <path d="M1.500 1.500l10 10.500-10 10.500M10 1.500L20 12 10 22.500" />
                </Icon>
              </ExpandButton>
            </SidebarTop>
            <NavList>
              {navIcons.map((icon, index) => (
                <NavButton key={index}>{icon}</NavButton>
              ))}
            </NavList>
            <SidebarFoot>
              <HatButton>
                <Icon w={32} h={26} color="#fff" sw={1.900}>
                  <path d="M3 19c-.5-7.500 3-14 9-16M20 3c6 2 9.500 8.500 9 16M12 13V3.500A2.500 2.500 0 0 1 14.500 1h3A2.500 2.500 0 0 1 20 3.500V13M8.500 6.500V11M23.500 6.500V11" />
                  <rect x="1" y="19.500" width="30" height="5" rx="2.500" />
                </Icon>
              </HatButton>
            </SidebarFoot>
          </Sidebar>
          <Workspace>
            <Header />
            <Body>
              <DetailPanel />
              <Content />
            </Body>
          </Workspace>
        </Shell>
        <Handle />
        <HelpWidget>
          <svg width="120" height="120" viewBox="0 0 120 120" fill="none">
            <path d="M0 60C0 20 20 0 60 0S120 20 120 60 100 120 60 120 0 100 0 60z" fill="#5d98cb" />
            <path d="M45 49.500C45 33 75 33 75 49 75 61 60 61 60 72" stroke="#fff" strokeWidth="4" strokeLinecap="round" />
            <circle cx="60" cy="83" r="3.200" fill="#fff" />
          </svg>
        </HelpWidget>
        <Pointer width="160" height="134" viewBox="0 0 160 134">
          <path d="M24 23L151.500 126" stroke="#ec4226" strokeWidth="5" />
          <path d="M7 7L34 14 18.500 32.500z" fill="#ec4226" />
        </Pointer>
      </Page>
    </>
  );
}
